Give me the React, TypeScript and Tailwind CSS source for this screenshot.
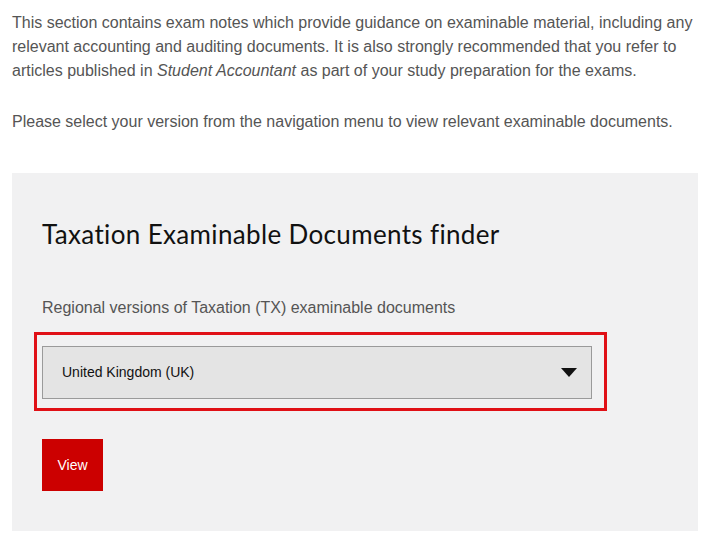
import React from "react";

export default function App() {
  return (
    <div className="w-[720px] h-[538px] bg-white overflow-hidden" style={{ fontFamily: '"Liberation Sans", Arial, sans-serif' }}>
      <div className="pl-[12px] pr-[10px] pt-[11px]">
        <p className="text-[16px] leading-[24px] text-[#555555]">
          This section contains exam notes which provide guidance on examinable material, including any relevant accounting and auditing documents. It is also strongly recommended that you refer to articles published in <i>Student Accountant</i> as part of your study preparation for the exams.
        </p>
        <p className="mt-[27px] text-[16px] leading-[24px] text-[#555555]">
          Please select your version from the navigation menu to view relevant examinable documents.
        </p>
      </div>
      <div className="ml-[12px] mt-[39px] w-[686px] h-[358px] bg-[#f1f1f2] pl-[30px] pt-[44px]">
        <h2 className="text-[26px] leading-[34px] tracking-[0.35px] text-[#111111]" style={{ fontFamily: 'Lato, "Open Sans", sans-serif' }}>
          Taxation Examinable Documents finder
        </h2>
        <div className="mt-[47px] text-[16px] leading-[20px] text-[#555555]">
          Regional versions of Taxation (TX) examinable documents
        </div>
        <div className="relative mt-[28px] w-[550px]">
          <div className="h-[53px] border border-[#9a9a9a] bg-[#e4e4e4] flex items-center justify-between pl-[19px] pr-[14px]">
            <span className="text-[14px] text-[#111111]">United Kingdom (UK)</span>
            <svg width="16" height="9" viewBox="0 0 16 9">
              <polygon points="0,0 16,0 8,9" fill="#111111" />
            </svg>
          </div>
          <div className="absolute left-[-8px] top-[-14px] w-[573px] h-[79px] border-[3px] border-[#e01016] pointer-events-none" />
        </div>
        <button className="mt-[40px] w-[61px] h-[52px] bg-[#cc0000] text-white text-[14px]">
          View
        </button>
      </div>
    </div>
  );
}
